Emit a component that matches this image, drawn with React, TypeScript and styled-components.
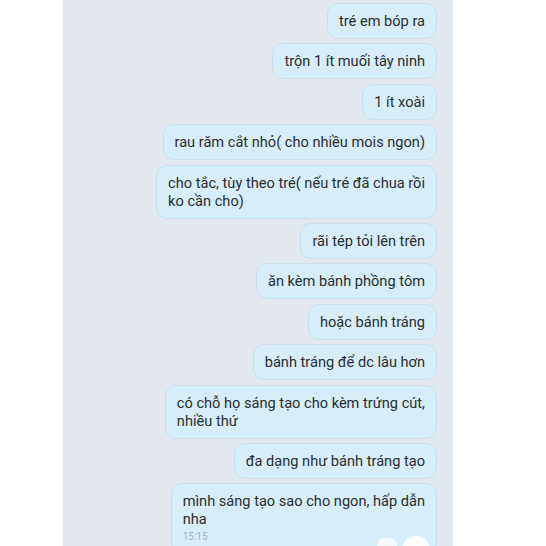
import React from "react";
import styled, { createGlobalStyle } from "styled-components";

const Global = createGlobalStyle`
  html, body { margin: 0; padding: 0; background: #ffffff; }
  body { font-family: Roboto, "Noto Sans", "Liberation Sans", sans-serif; }
`;

const Page = styled.div`
  width: 546px;
  height: 546px;
  overflow: hidden;
  display: flex;
  background: #ffffff;
`;

const Panel = styled.div`
  margin-left: 63px;
  width: 390px;
  height: 546px;
  background: #e2e8ee;
  display: flex;
  flex-direction: column;
  align-items: flex-end;
  gap: 4.4px;
  padding: 3px 16px 0 0;
  box-sizing: border-box;
`;

const Bubble = styled.div`
  position: relative;
  background: #d6eefa;
  border: 1px solid #cadfea;
  border-radius: 11px;
  padding: 8px 11px;
  font-size: 14.6px;
  line-height: 18px;
  color: #2a2e30;
  white-space: pre-line;
  flex-shrink: 0;
`;

const Time = styled.div`
  font-size: 10px;
  line-height: 18px;
  color: #a8b6bd;
`;

const Reactions = styled.div`
  position: absolute;
  right: 6px;
  top: 52px;
  display: flex;
  align-items: flex-start;
  gap: 5px;
`;

const Pill = styled.div`
  margin-top: 2px;
  width: 20px;
  height: 14px;
  border-radius: 7px;
  background: #f4f9fc;
`;

const Circle = styled.div`
  width: 28px;
  height: 28px;
  border-radius: 50%;
  background: #ffffff;
`;

const messages = [
  "tré em bóp ra",
  "trộn 1 ít muối tây ninh",
  "1 ít xoài",
  "rau răm cắt nhỏ( cho nhiều mois ngon)",
  "cho tắc, tùy theo tré( nếu tré đã chua rồi\nko cần cho)",
  "rãi tép tỏi lên trên",
  "ăn kèm bánh phồng tôm",
  "hoặc bánh tráng",
  "bánh tráng để dc lâu hơn",
  "có chỗ họ sáng tạo cho kèm trứng cút,\nnhiều thứ",
  "đa dạng như bánh tráng tạo",
];

export default function App() {
  return (
    <Page>
      <Global />
      <Panel>
        {messages.map((m) => (
          <Bubble key={m}>{m}</Bubble>
        ))}
        <Bubble>
          {"mình sáng tạo sao cho ngon, hấp dẫn\nnha"}
          <Time>15:15</Time>
          <Reactions>
            <Pill />
            <Circle />
          </Reactions>
        </Bubble>
      </Panel>
    </Page>
  );
}
